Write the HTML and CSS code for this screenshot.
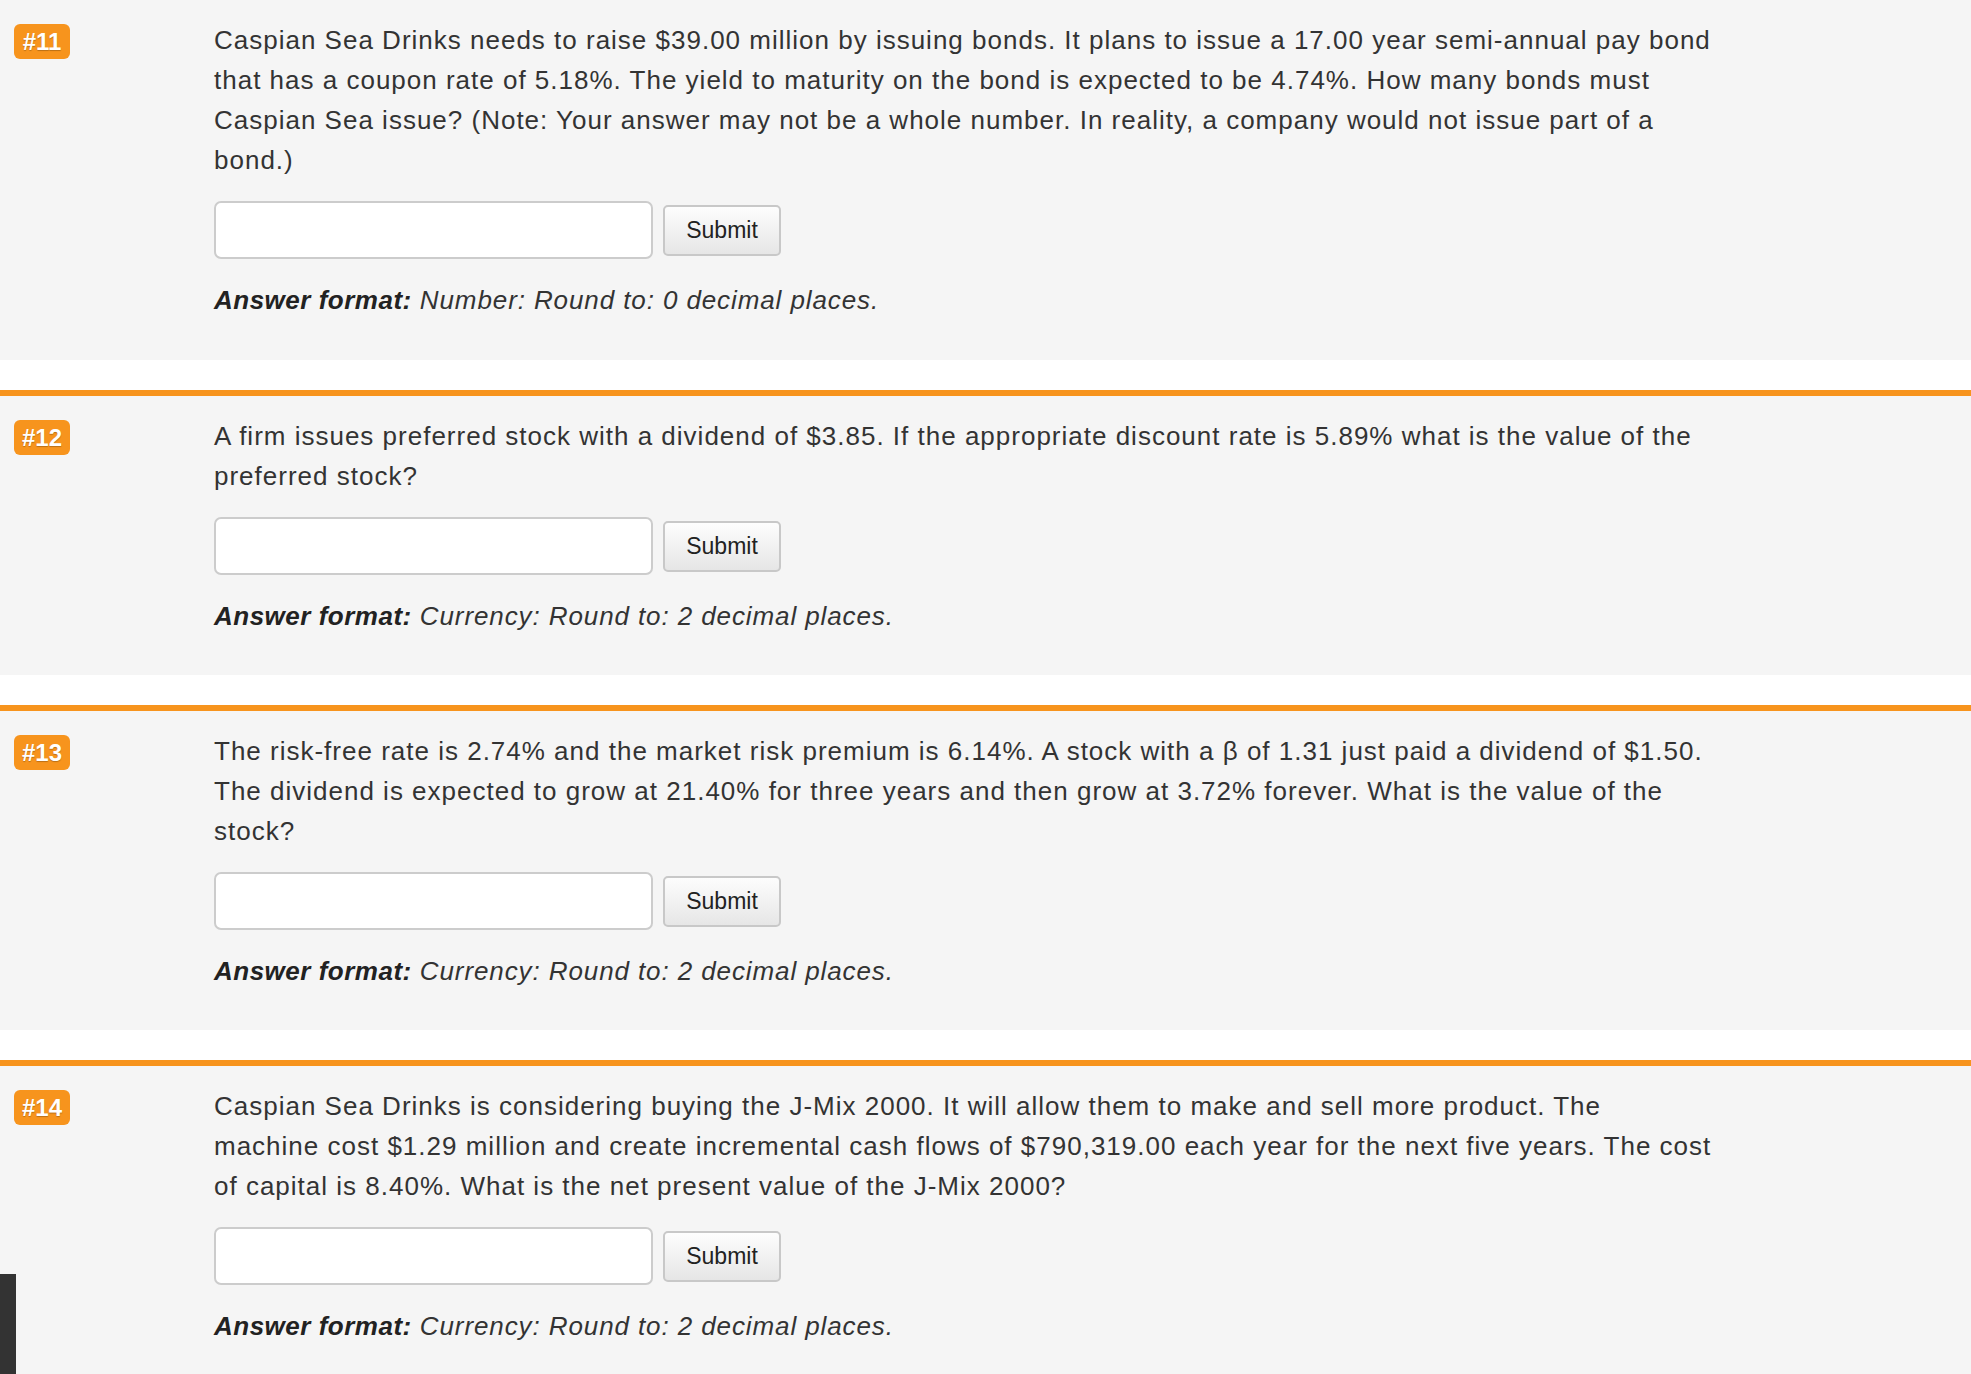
FILE: index.html
```html
<!DOCTYPE html>
<html lang="en">
<head>
    <meta charset="UTF-8">
    <title>Questions</title>
    <link rel="stylesheet" href="styles.css">
</head>
<body>
    <div class="question">
        <span class="q-num">#11</span>
        <div class="q-body">
            <p class="q-text">Caspian Sea Drinks needs to raise $39.00 million by issuing bonds. It plans to issue a 17.00 year semi-annual pay bond that has a coupon rate of 5.18%. The yield to maturity on the bond is expected to be 4.74%. How many bonds must Caspian Sea issue? (Note: Your answer may not be a whole number. In reality, a company would not issue part of a bond.)</p>
            <div class="answer-row">
                <input type="text" class="answer-input">
                <button class="submit-btn">Submit</button>
            </div>
            <p class="answer-format"><strong>Answer format:</strong> Number: Round to: 0 decimal places.</p>
        </div>
    </div>

    <div class="question">
        <span class="q-num">#12</span>
        <div class="q-body">
            <p class="q-text">A firm issues preferred stock with a dividend of $3.85. If the appropriate discount rate is 5.89% what is the value of the preferred stock?</p>
            <div class="answer-row">
                <input type="text" class="answer-input">
                <button class="submit-btn">Submit</button>
            </div>
            <p class="answer-format"><strong>Answer format:</strong> Currency: Round to: 2 decimal places.</p>
        </div>
    </div>

    <div class="question">
        <span class="q-num">#13</span>
        <div class="q-body">
            <p class="q-text">The risk-free rate is 2.74% and the market risk premium is 6.14%. A stock with a β of 1.31 just paid a dividend of $1.50. The dividend is expected to grow at 21.40% for three years and then grow at 3.72% forever. What is the value of the stock?</p>
            <div class="answer-row">
                <input type="text" class="answer-input">
                <button class="submit-btn">Submit</button>
            </div>
            <p class="answer-format"><strong>Answer format:</strong> Currency: Round to: 2 decimal places.</p>
        </div>
    </div>

    <div class="question">
        <span class="q-num">#14</span>
        <div class="q-body">
            <p class="q-text">Caspian Sea Drinks is considering buying the J-Mix 2000. It will allow them to make and sell more product. The machine cost $1.29 million and create incremental cash flows of $790,319.00 each year for the next five years. The cost of capital is 8.40%. What is the net present value of the J-Mix 2000?</p>
            <div class="answer-row">
                <input type="text" class="answer-input">
                <button class="submit-btn">Submit</button>
            </div>
            <p class="answer-format"><strong>Answer format:</strong> Currency: Round to: 2 decimal places.</p>
        </div>
    </div>

    <div class="side-tab"></div>
</body>
</html>
```

FILE: styles.css
```css
body {
    margin: 0;
    background: #fff;
    font-family: "Liberation Sans", Arial, Helvetica, sans-serif;
    color: #333;
    height: 1374px;
    overflow: hidden;
}
.question {
    display: flex;
    background: #f5f5f5;
    padding: 20px 0 39px;
}
.question:first-child {
    padding-bottom: 40px;
}
.question:last-child {
    padding-bottom: 80px;
}
.question + .question {
    margin-top: 30px;
    border-top: 6px solid #f7941d;
}
.q-num {
    flex: none;
    width: 56px;
    height: 35px;
    margin: 4px 144px 0 14px;
    background: #f7941d;
    border-radius: 6px;
    color: #fff;
    font-weight: bold;
    font-size: 24px;
    line-height: 35px;
    text-align: center;
    text-shadow: 0 1px 1px rgba(0,0,0,0.25);
}
.q-body {
    width: 1498px;
}
.q-text {
    margin: 0;
    font-size: 26px;
    line-height: 40px;
    letter-spacing: 1px;
}
.answer-row {
    display: flex;
    align-items: center;
    margin: 21px 0;
}
.answer-input {
    box-sizing: border-box;
    width: 439px;
    height: 58px;
    border: 2px solid #ccc;
    border-radius: 7px;
    background: #fff;
    margin: 0;
}
.submit-btn {
    box-sizing: border-box;
    width: 118px;
    height: 51px;
    margin-left: 10px;
    border: 2px solid #c8c8c8;
    border-radius: 5px;
    background: linear-gradient(#fdfdfd, #e6e6e6);
    color: #222;
    font-family: "Liberation Sans", Arial, sans-serif;
    font-size: 23px;
    padding: 0;
}
.answer-format {
    margin: 0;
    font-size: 26px;
    line-height: 40px;
    font-style: italic;
    letter-spacing: 0.9px;
}
.answer-format strong {
    color: #222;
    letter-spacing: 0.5px;
}
.side-tab {
    position: fixed;
    left: 0;
    top: 1274px;
    width: 16px;
    height: 100px;
    background: #333;
}
```
